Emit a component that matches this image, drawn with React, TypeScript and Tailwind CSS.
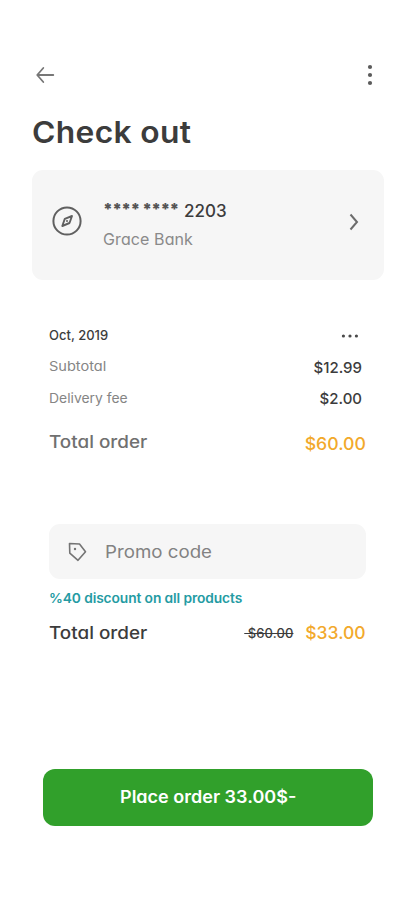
import type { ReactNode } from "react";

function Row({ className, children }: { className: string; children: ReactNode }) {
  return <div className={`flex items-center justify-between whitespace-nowrap ${className}`}>{children}</div>;
}

function Dots({ vertical = false }: { vertical?: boolean }) {
  return vertical ? (
    <svg width="6" height="22" viewBox="0 0 6 22" fill="#5b5b5b">
      <circle cx="3" cy="3" r="2.1" />
      <circle cx="3" cy="11" r="2.1" />
      <circle cx="3" cy="19" r="2.1" />
    </svg>
  ) : (
    <svg width="18" height="4" viewBox="0 0 18 4" fill="#4a4a4a">
      <circle cx="2.4" cy="2" r="1.6" />
      <circle cx="9" cy="2" r="1.6" />
      <circle cx="15.4" cy="2" r="1.6" />
    </svg>
  );
}

export default function App() {
  return (
    <main className="flex h-[900px] w-[415px] flex-col bg-white pt-[60px] font-[Inter,'Open_Sans',sans-serif] text-[#3c3c3c] [font-feature-settings:'cv11']">
      <header className="flex h-[30px] items-center justify-between pr-[42px] pl-[36px]">
        <svg width="19" height="18" viewBox="0 0 19 18" fill="none" stroke="#777" strokeWidth="1.8" strokeLinecap="round" strokeLinejoin="round">
          <path d="M17.3 9H1.5M7.3 2L1.2 9L7.3 16" />
        </svg>
        <Dots vertical />
      </header>

      <h1 className="mt-[22px] ml-[32px] h-10 w-fit origin-left scale-x-[1.06] text-[30px] leading-10 font-semibold tracking-[0.3px] whitespace-nowrap">Check out</h1>

      <section className="mt-[18px] mr-[31px] ml-[32px] flex h-[110px] items-center rounded-[11px] bg-[#f6f6f6] pr-[25px] pl-[20px]">
        <svg width="30" height="30" viewBox="0 0 30 30" fill="none" stroke="#606060" strokeWidth="2" className="mb-[8px]">
          <circle cx="15" cy="15" r="13.6" />
          <path d="M20 10L17.5 17L10.3 20L12.8 12.8Z" strokeWidth="1.9" strokeLinejoin="round" />
          <circle cx="15" cy="15" r="1" fill="#606060" stroke="none" />
        </svg>
        <div className="ml-[21px] flex flex-1 flex-col">
          <div className="mt-px flex h-7 items-center whitespace-nowrap">
            <span className="w-[81px] pb-[6px] text-[16px] font-black tracking-[-0.6px] text-[#555]">**** ****</span>
            <span className="text-[17px] font-medium">2203</span>
          </div>
          <span className="mt-[-1px] h-7 text-[16px] leading-7 tracking-[0.1px] text-[#8a8a8a]">Grace Bank</span>
        </div>
        <svg width="10" height="18" viewBox="0 0 10 18" fill="none" stroke="#6c6c6c" strokeWidth="2" className="mb-[6px]">
          <path d="M1.5 1.5L8 9L1.5 16.5" />
        </svg>
      </section>

      <section className="mt-[40px] pr-[49px] pl-[49px]">
        <Row className="h-[31px] pr-[7px]">
          <span className="text-[13px] font-medium">Oct, 2019</span>
          <Dots />
        </Row>
        <Row className="h-[32px] pr-[4px]">
          <span className="origin-left scale-x-[1.12] text-[13px] text-[#858585]">Subtotal</span>
          <span className="mt-[2px] text-[15px] font-medium">$12.99</span>
        </Row>
        <Row className="h-[31px] pr-[4px]">
          <span className="origin-left scale-x-[1.07] text-[13px] text-[#858585]">Delivery fee</span>
          <span className="mt-[2px] text-[15px] font-medium">$2.00</span>
        </Row>
        <Row className="mt-[12px] h-[34px]">
          <span className="origin-left scale-x-[1.11] text-[17px] font-medium text-[#707070]">Total order</span>
          <span className="mt-[3px] origin-right scale-x-[1.04] text-[17px] font-medium text-[#f2a92b]">$60.00</span>
        </Row>
      </section>

      <section className="mt-[64px] px-[49px]">
        <div className="flex h-[55px] items-center rounded-[11px] bg-[#f6f6f6] pl-[19px]">
          <svg width="19" height="20" viewBox="0 0 19 20" fill="none" stroke="#747474" strokeWidth="1.6" strokeLinejoin="round">
            <path d="M1.5 1.5L11.5 2L17.5 9.8L10 18.3L1.8 11.2Z" />
            <circle cx="7" cy="7" r="1.2" fill="#747474" stroke="none" />
          </svg>
          <span className="mt-[2px] ml-[18px] origin-left scale-x-[1.1] text-[17px] text-[#828282]">Promo code</span>
        </div>
        <p className="mt-[9px] h-5 w-fit origin-left scale-x-[1.06] text-[13px] leading-5 font-semibold tracking-[-0.1px] whitespace-nowrap text-[#249ba3]">%40 discount on all products</p>
        <Row className="mt-[10px] h-[32px]">
          <span className="origin-left scale-x-[1.11] text-[17px] font-medium">Total order</span>
          <span className="flex items-center">
            <span className="mr-[12px] text-[13px] font-medium tracking-[0.1px] whitespace-pre line-through">{"\u00a0$60.00"}</span>
            <span className="ml-[2px] origin-right scale-x-[1.03] text-[17px] font-medium text-[#f2a92b]">$33.00</span>
          </span>
        </Row>
      </section>

      <button className="mt-[119px] ml-[43px] h-[57px] w-[330px] rounded-[12px] bg-[#31a02b] text-[17px] font-semibold whitespace-nowrap text-white">
        <span className="inline-block scale-x-[1.06]">Place order 33.00$-</span>
      </button>
    </main>
  );
}
